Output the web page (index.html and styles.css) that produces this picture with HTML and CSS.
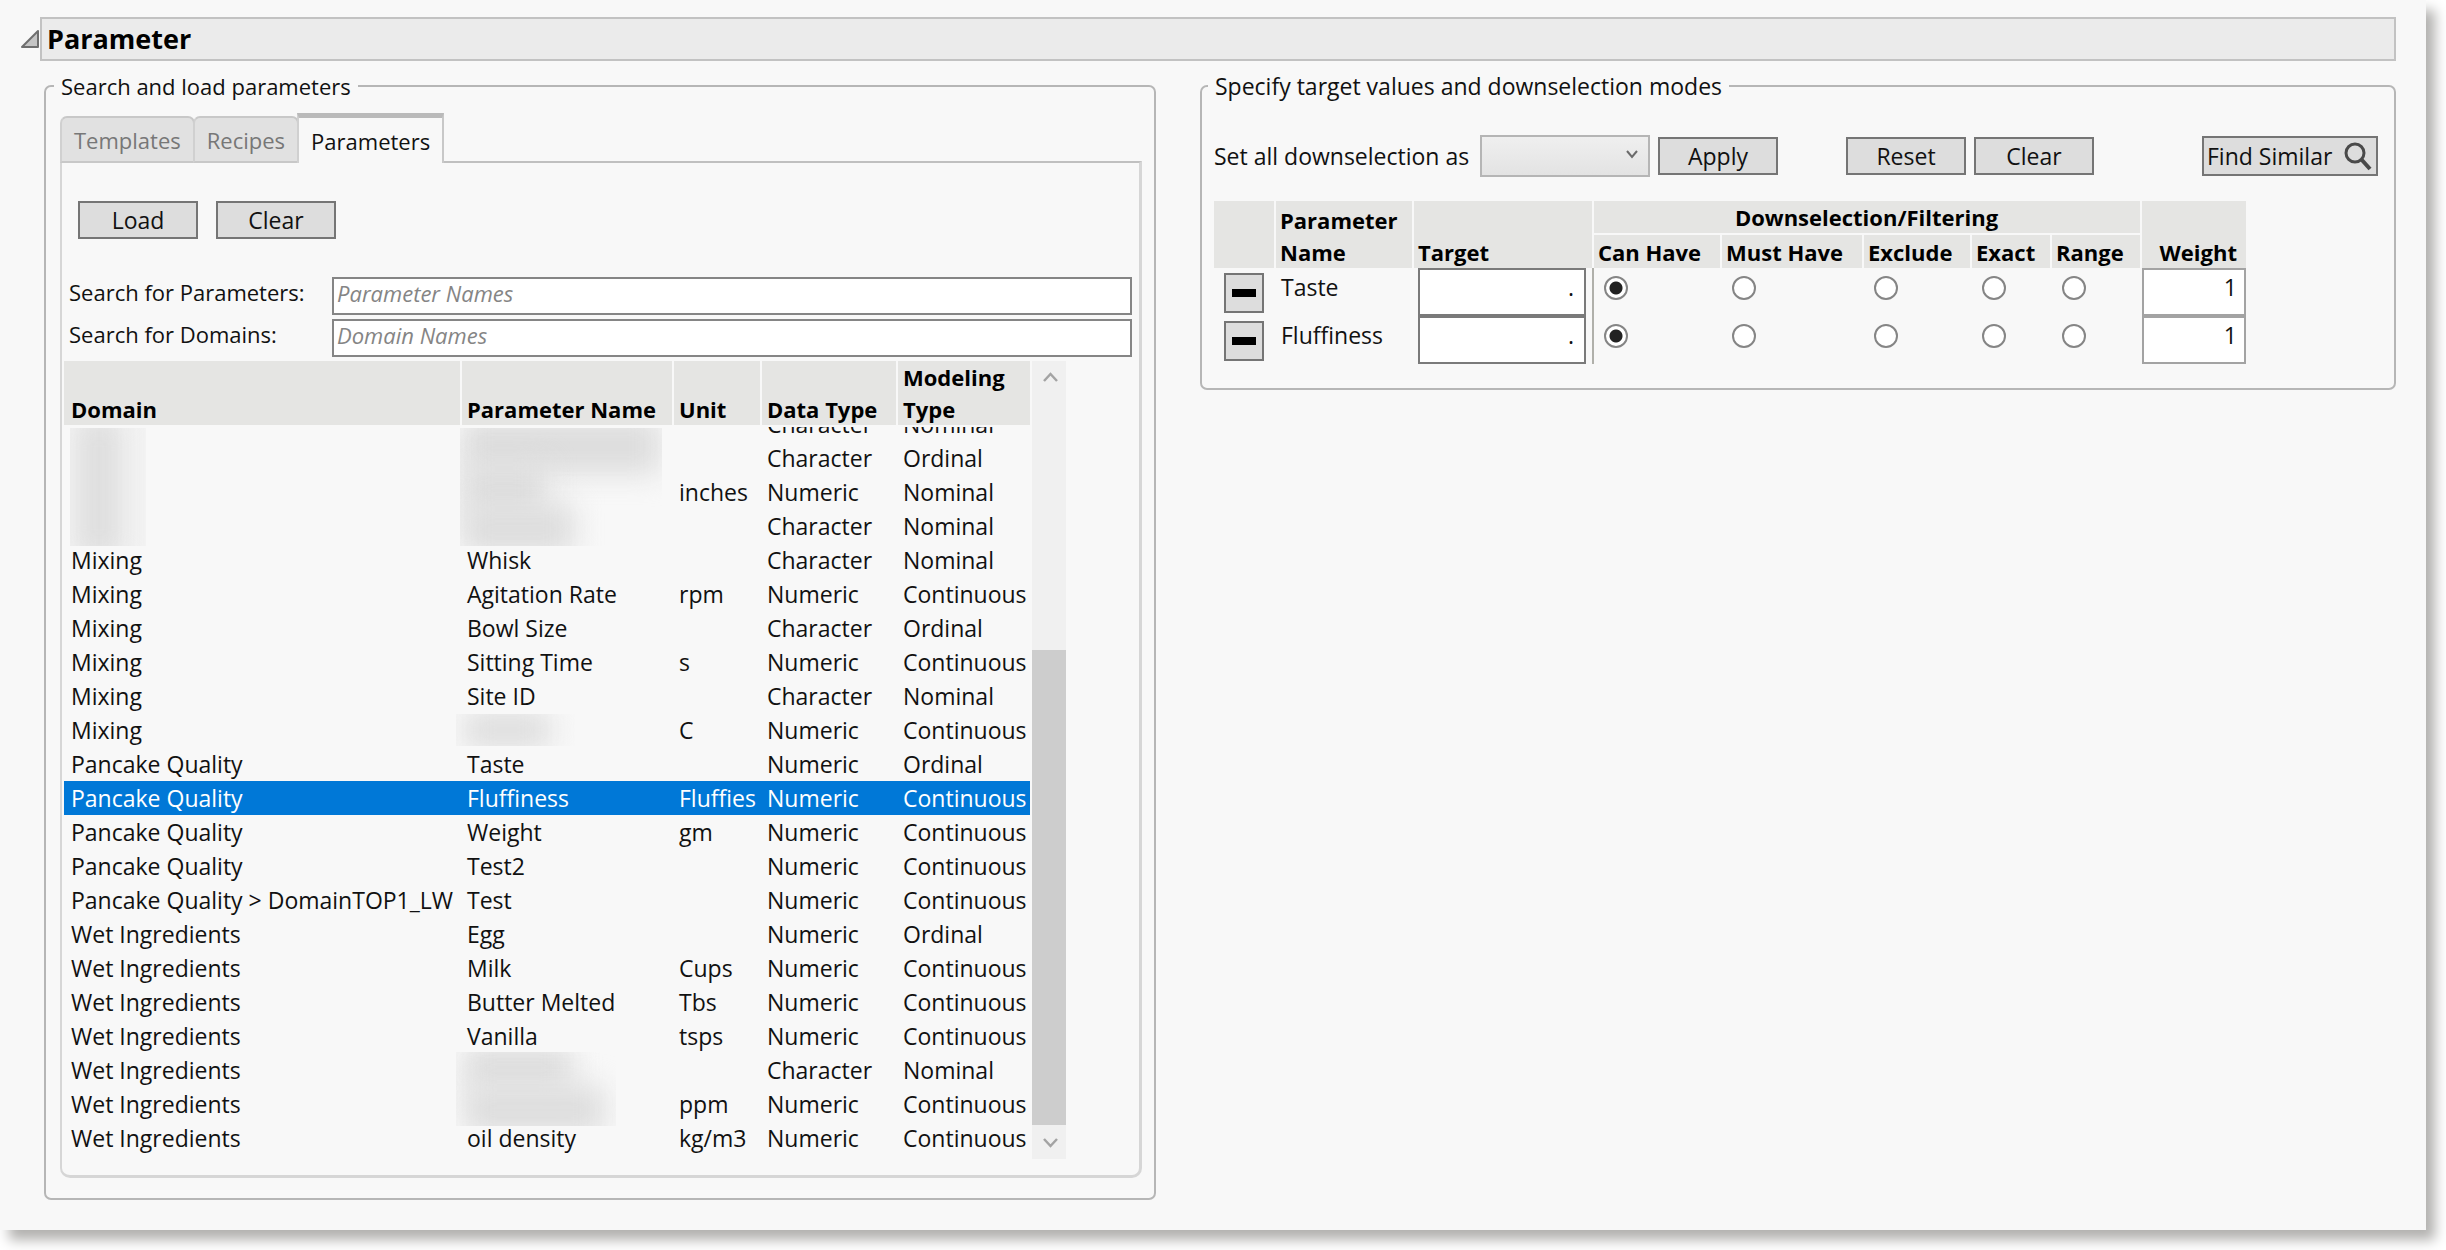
FILE: index.html
```html
<!DOCTYPE html>
<html lang="en">
<head>
    <meta charset="UTF-8">
    <meta name="viewport" content="width=device-width, initial-scale=1.0">
    <title>Parameter</title>
    <link rel="stylesheet" href="styles.css">
</head>
<body>
    <main class="window">
        <header class="outline">
            <svg class="disclosure" width="20" height="20" viewBox="0 0 20 20"><path d="M18 2 V18 H2 Z" fill="#c4c4c4" stroke="#6e6e6e" stroke-width="2" stroke-linejoin="round"/></svg>
            <h1>Parameter</h1>
        </header>
        <div class="columns">
            <fieldset class="load">
                <legend>Search and load parameters</legend>
                <div class="tabs" role="tablist">
                    <button type="button" role="tab" class="tab">Templates</button>
                    <button type="button" role="tab" class="tab">Recipes</button>
                    <button type="button" role="tab" class="tab active" aria-selected="true">Parameters</button>
                </div>
                <div class="tab-panel" role="tabpanel">
                    <div class="actions">
                        <button type="button" class="btn">Load</button>
                        <button type="button" class="btn">Clear</button>
                    </div>
                    <form class="search">
                        <label for="search-params">Search for Parameters:</label>
                        <input type="text" id="search-params" placeholder="Parameter Names">
                        <label for="search-domains">Search for Domains:</label>
                        <input type="text" id="search-domains" placeholder="Domain Names">
                    </form>
                    <div class="list">
                        <table class="params">
                            <colgroup>
                                <col class="c-domain"><col class="c-name"><col class="c-unit"><col class="c-data"><col class="c-model">
                            </colgroup>
                            <thead>
                                <tr><th>Domain</th><th>Parameter Name</th><th>Unit</th><th>Data Type</th><th>Modeling<br>Type</th></tr>
                            </thead>
                            <tbody>
                                <tr class="cut"><td></td><td></td><td></td><td><div>Character</div></td><td><div>Nominal</div></td></tr>
                                <tr><td></td><td></td><td></td><td>Character</td><td>Ordinal</td></tr>
                                <tr><td></td><td></td><td>inches</td><td>Numeric</td><td>Nominal</td></tr>
                                <tr><td></td><td></td><td></td><td>Character</td><td>Nominal</td></tr>
                                <tr><td>Mixing</td><td>Whisk</td><td></td><td>Character</td><td>Nominal</td></tr>
                                <tr><td>Mixing</td><td>Agitation Rate</td><td>rpm</td><td>Numeric</td><td>Continuous</td></tr>
                                <tr><td>Mixing</td><td>Bowl Size</td><td></td><td>Character</td><td>Ordinal</td></tr>
                                <tr><td>Mixing</td><td>Sitting Time</td><td>s</td><td>Numeric</td><td>Continuous</td></tr>
                                <tr><td>Mixing</td><td>Site ID</td><td></td><td>Character</td><td>Nominal</td></tr>
                                <tr><td>Mixing</td><td></td><td>C</td><td>Numeric</td><td>Continuous</td></tr>
                                <tr><td>Pancake Quality</td><td>Taste</td><td></td><td>Numeric</td><td>Ordinal</td></tr>
                                <tr class="selected"><td>Pancake Quality</td><td>Fluffiness</td><td>Fluffies</td><td>Numeric</td><td>Continuous</td></tr>
                                <tr><td>Pancake Quality</td><td>Weight</td><td>gm</td><td>Numeric</td><td>Continuous</td></tr>
                                <tr><td>Pancake Quality</td><td>Test2</td><td></td><td>Numeric</td><td>Continuous</td></tr>
                                <tr><td>Pancake Quality &gt; DomainTOP1_LW</td><td>Test</td><td></td><td>Numeric</td><td>Continuous</td></tr>
                                <tr><td>Wet Ingredients</td><td>Egg</td><td></td><td>Numeric</td><td>Ordinal</td></tr>
                                <tr><td>Wet Ingredients</td><td>Milk</td><td>Cups</td><td>Numeric</td><td>Continuous</td></tr>
                                <tr><td>Wet Ingredients</td><td>Butter Melted</td><td>Tbs</td><td>Numeric</td><td>Continuous</td></tr>
                                <tr><td>Wet Ingredients</td><td>Vanilla</td><td>tsps</td><td>Numeric</td><td>Continuous</td></tr>
                                <tr><td>Wet Ingredients</td><td></td><td></td><td>Character</td><td>Nominal</td></tr>
                                <tr><td>Wet Ingredients</td><td></td><td>ppm</td><td>Numeric</td><td>Continuous</td></tr>
                                <tr><td>Wet Ingredients</td><td>oil density</td><td>kg/m3</td><td>Numeric</td><td>Continuous</td></tr>
                            </tbody>
                        </table>
                        <div class="scrollbar">
                            <svg width="34" height="34" viewBox="0 0 34 34"><path d="M12 20 L18.500 13 L25 20" fill="none" stroke="#a3a3a3" stroke-width="2.500"/></svg>
                            <div class="thumb"></div>
                            <svg width="34" height="34" viewBox="0 0 34 34"><path d="M12 14 L18.500 21 L25 14" fill="none" stroke="#a3a3a3" stroke-width="2.500"/></svg>
                        </div>
                        <!-- redacted values -->
                        <div class="redact redact-domain"><i></i></div>
                        <div class="redact redact-names"><i></i><i></i><i></i></div>
                        <div class="redact redact-mixing"><i></i></div>
                        <div class="redact redact-wet"><i></i><i></i></div>
                    </div>
                </div>
            </fieldset>
            <fieldset class="targets">
                <legend>Specify target values and downselection modes</legend>
                <div class="toolbar">
                    <label for="mode">Set all downselection as</label>
                    <span class="select">
                        <select id="mode" disabled><option></option></select>
                        <svg width="14" height="10" viewBox="0 0 14 10"><path d="M2 2 L7 8 L12 2" fill="none" stroke="#6b6b6b" stroke-width="2"/></svg>
                    </span>
                    <button type="button" class="btn">Apply</button>
                    <button type="button" class="btn reset">Reset</button>
                    <button type="button" class="btn">Clear</button>
                    <button type="button" class="btn find">Find Similar
                        <svg width="30" height="30" viewBox="0 0 30 30" fill="none" stroke="#4a4a4a"><circle cx="12" cy="12" r="9" stroke-width="3"/><path d="M18 18 L27 28" stroke-width="4"/></svg>
                    </button>
                </div>
                <table class="modes">
                    <colgroup>
                        <col class="m-remove"><col class="m-name"><col class="m-target"><col class="m-can"><col class="m-must"><col class="m-exclude"><col class="m-exact"><col class="m-range"><col class="m-weight">
                    </colgroup>
                    <thead>
                        <tr>
                            <th rowspan="2"></th>
                            <th rowspan="2">Parameter<br>Name</th>
                            <th rowspan="2">Target</th>
                            <th colspan="5" class="group">Downselection/Filtering</th>
                            <th rowspan="2" class="right">Weight</th>
                        </tr>
                        <tr><th>Can Have</th><th>Must Have</th><th>Exclude</th><th>Exact</th><th>Range</th></tr>
                    </thead>
                    <tbody>
                        <tr>
                            <td class="remove"><button type="button" class="btn minus" aria-label="Remove Taste"><span></span></button></td>
                            <td>Taste</td>
                            <td class="target"><input type="text" value="." aria-label="Taste target"></td>
                            <td class="radio"><input type="radio" name="taste" aria-label="Can Have" checked></td>
                            <td class="radio"><input type="radio" name="taste" aria-label="Must Have"></td>
                            <td class="radio"><input type="radio" name="taste" aria-label="Exclude"></td>
                            <td class="radio"><input type="radio" name="taste" aria-label="Exact"></td>
                            <td class="radio"><input type="radio" name="taste" aria-label="Range"></td>
                            <td class="weight"><input type="text" value="1" aria-label="Taste weight"></td>
                        </tr>
                        <tr>
                            <td class="remove"><button type="button" class="btn minus" aria-label="Remove Fluffiness"><span></span></button></td>
                            <td>Fluffiness</td>
                            <td class="target"><input type="text" value="." aria-label="Fluffiness target"></td>
                            <td class="radio"><input type="radio" name="fluffiness" aria-label="Can Have" checked></td>
                            <td class="radio"><input type="radio" name="fluffiness" aria-label="Must Have"></td>
                            <td class="radio"><input type="radio" name="fluffiness" aria-label="Exclude"></td>
                            <td class="radio"><input type="radio" name="fluffiness" aria-label="Exact"></td>
                            <td class="radio"><input type="radio" name="fluffiness" aria-label="Range"></td>
                            <td class="weight"><input type="text" value="1" aria-label="Fluffiness weight"></td>
                        </tr>
                    </tbody>
                </table>
            </fieldset>
        </div>
    </main>
</body>
</html>
```

FILE: styles.css
```css
:root { --bg: #f8f8f8; --head: #e5e5e3; --line: #b6b6b6; --btn: #dddddd; --btn-line: #757575; }
* { box-sizing: border-box; }
body { min-height: 100vh; margin: 0; padding: 0 20px 20px 0; background: #fff; color: #111; font-family: "Open Sans", "Noto Sans", sans-serif; font-size: 23px; line-height: 30px; overflow-x: hidden; }
button, input, select { font: inherit; color: inherit; margin: 0; }

.window { min-height: calc(100vh - 20px); padding: 17px 30px 0 20px; background: var(--bg); box-shadow: 9px 10px 12px #b2b1af; }
.outline { display: flex; align-items: center; }
.outline h1 { flex: 1; margin: 0; padding: 0 5px; border: 2px solid #c2c2c2; background: #ebebeb; color: #000; font-size: 27px; line-height: 40px; }

.columns { display: grid; grid-template-columns: 1112fr 1196fr; gap: 44px; align-items: start; margin: 10px 0 0 24px; }
fieldset { min-width: 0; margin: 0; padding: 0 12px 20px 14px; border: 2px solid var(--line); border-radius: 7px; }
legend { margin-left: -6px; padding: 0 7px; }
.load legend, .search, .tab, th { font-size: 22px; }

.btn { min-width: 120px; height: 38px; padding: 0; border: 2px solid var(--btn-line); background: var(--btn); line-height: 30px; }

.tabs { display: flex; align-items: flex-end; margin: 12px 0 -2px; position: relative; }
.tab { height: 47px; padding: 0 12px; border: 2px solid #c8c8c8; border-left-color: #d0d0d0; border-radius: 7px 7px 0 0; background: #e1e1e1; color: #777; }
.tab + .tab { margin-left: -2px; }
.tab.active { height: 50px; border-top: 5px solid #bababa; border-bottom: 0; border-radius: 0; background: var(--bg); color: #111; }

.tab-panel { padding: 38px 7px 16px 2px; border: 2px solid #d6d6d6; border-top-color: #c0c0c0; border-right-width: 3px; border-bottom-width: 3px; border-radius: 0 0 10px 10px; }
.actions { display: flex; gap: 18px; margin-left: 14px; }
.search { display: grid; grid-template-columns: 263px 1fr; row-gap: 4px; margin: 38px 0 4px 5px; }
.search input { height: 38px; padding: 0 3px 6px; border: 2px solid #858585; background: #fff; }
.search input::placeholder { color: #858585; font-style: italic; opacity: 1; }

.list { display: flex; gap: 2px; position: relative; height: 798px; }
table { border-collapse: separate; border-spacing: 0; table-layout: fixed; }
th { padding: 0 4px; border-right: 2px solid var(--bg); background: var(--head); color: #000; text-align: left; vertical-align: bottom; line-height: 32px; white-space: nowrap; }
td { padding: 0 5px; white-space: nowrap; }
.params { width: 966px; height: 794px; }
.params th, .params td { padding: 0 0 0 5px; }
.params th:first-child, .params td:first-child { padding-left: 7px; }
.params th:last-child { border-right: 0; }
.params td { height: 34px; line-height: 34px; }
.params .cut td { height: 16px; line-height: 34px; }
.cut div { display: flex; align-items: flex-end; height: 14px; margin-top: 2px; overflow: hidden; }
.selected td { background: #0078d7; color: #fff; }
.c-domain { width: 398px; }
.c-name { width: 212px; }
.c-unit { width: 88px; }
.c-data { width: 136px; }
.c-model { width: 132px; }

.scrollbar { display: flex; flex-direction: column; width: 34px; background: #f0f0f0; }
.thumb { height: 475px; margin-top: auto; background: #cdcdcd; }

.redact { position: absolute; overflow: hidden; }
.redact i { position: absolute; background: #dddddd; filter: blur(14px); }
.redact-domain { left: 6px; top: 67px; width: 76px; height: 118px; background: #f3f3f3; }
.redact-domain i { left: 8px; top: -10px; width: 42px; height: 140px; }
.redact-names { left: 396px; top: 67px; width: 202px; height: 118px; }
.redact-names i:nth-child(1) { left: 2px; top: -10px; width: 198px; height: 56px; }
.redact-names i:nth-child(2) { left: 2px; top: 36px; width: 84px; height: 50px; }
.redact-names i:nth-child(3) { left: 2px; top: 76px; width: 112px; height: 50px; }
.redact-mixing { left: 392px; top: 353px; width: 120px; height: 32px; }
.redact-mixing i { left: 8px; top: -2px; width: 86px; height: 36px; }
.redact-wet { left: 392px; top: 691px; width: 160px; height: 74px; }
.redact-wet i:nth-child(1) { left: 8px; top: -6px; width: 108px; height: 44px; }
.redact-wet i:nth-child(2) { left: 8px; top: 34px; width: 140px; height: 48px; }

.targets { padding-left: 12px; padding-bottom: 24px; }
.toolbar { display: flex; align-items: center; gap: 8px; margin-top: 34px; padding-right: 4px; height: 42px; }
.toolbar label { width: 258px; white-space: nowrap; }
.select { display: flex; position: relative; }
.select select { width: 170px; height: 42px; border: 2px solid #b5b5b5; background: linear-gradient(#efefef, #e3e3e3); appearance: none; opacity: 1; }
.select svg { position: absolute; right: 11px; top: 14px; pointer-events: none; }
.reset { margin-left: 60px; }
.find { display: flex; justify-content: space-between; align-items: center; width: 176px; height: 40px; margin-left: auto; padding: 0 3px; white-space: nowrap; }

.modes { width: 1032px; margin-top: 24px; }
.modes th { padding: 1px 5px 0 4px; line-height: 32px; }
.modes .group { border-bottom: 2px solid var(--bg); text-align: center; line-height: 31px; }
.modes th.right { padding-right: 9px; border-right: 0; text-align: right; }
.modes td { height: 48px; line-height: 38px; vertical-align: top; }
.modes .remove { padding: 5px 10px 0; }
.minus { display: flex; justify-content: center; align-items: center; min-width: 0; width: 40px; height: 40px; }
.minus span { width: 24px; height: 8px; background: #000; }
.modes .target { padding: 0 6px 0 4px; border-right: 2px solid #b0b0aa; }
.modes .weight { padding: 0; }
.target input, .weight input { display: block; width: 100%; height: 48px; padding: 0 10px 10px; border: 2px solid #7a7a7a; background: #fff; text-align: right; }
.weight input { padding-right: 7px; border-color: #a3a3a3; }
.modes .radio { padding: 8px 10px 0; }
.radio input { display: block; width: 24px; height: 24px; border: 2px solid #858585; border-radius: 50%; background: #fff; appearance: none; }
.radio input:checked { background: radial-gradient(circle, #222 6px, #fff 7px); }
.m-remove { width: 62px; }
.m-name { width: 138px; }
.m-target { width: 180px; }
.m-can { width: 128px; }
.m-must { width: 142px; }
.m-exclude { width: 108px; }
.m-exact { width: 80px; }
.m-range { width: 90px; }
.m-weight { width: 104px; }
```
